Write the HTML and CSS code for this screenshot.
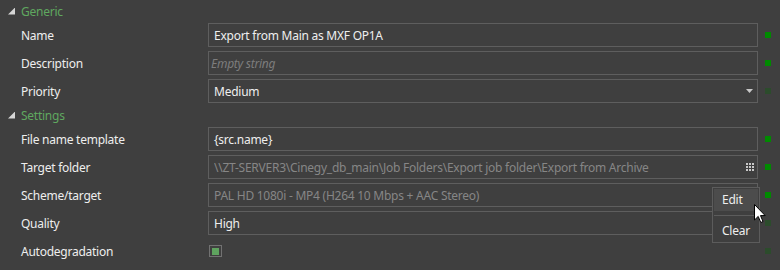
FILE: index.html
```html
<!DOCTYPE html>
<html lang="en">
<head>
  <meta charset="UTF-8" />
  <title>Job properties</title>
  <link rel="stylesheet" href="styles.css">
</head>
<body>
  <div class="grid">
    <!-- Generic -->
    <div class="group">
      <span class="expander"></span>
      <span class="group-title">Generic</span>
    </div>

    <div class="row">
      <div class="label">Name</div>
      <div class="field">Export from Main as MXF OP1A</div>
      <span class="dot ok"></span>
    </div>

    <div class="row">
      <div class="label">Description</div>
      <div class="field placeholder">Empty string</div>
      <span class="dot ok"></span>
    </div>

    <div class="row">
      <div class="label">Priority</div>
      <div class="field combo">
        <span class="value">Medium</span>
        <span class="arrow"></span>
      </div>
      <span class="dot dim"></span>
    </div>

    <!-- Settings -->
    <div class="group">
      <span class="expander"></span>
      <span class="group-title">Settings</span>
    </div>

    <div class="row">
      <div class="label">File name template</div>
      <div class="field">{src.name}</div>
      <span class="dot ok"></span>
    </div>

    <div class="row">
      <div class="label">Target folder</div>
      <div class="field readonly combo">
        <span class="value">\\ZT-SERVER3\Cinegy_db_main\Job Folders\Export job folder\Export from Archive</span>
        <svg class="browse" width="8" height="8" viewBox="0 0 8 8">
          <rect x="0" y="0" width="2" height="2" />
          <rect x="3" y="0" width="2" height="2" />
          <rect x="6" y="0" width="2" height="2" />
          <rect x="0" y="3" width="2" height="2" />
          <rect x="3" y="3" width="2" height="2" />
          <rect x="6" y="3" width="2" height="2" />
          <rect x="0" y="6" width="2" height="2" />
          <rect x="3" y="6" width="2" height="2" />
          <rect x="6" y="6" width="2" height="2" />
        </svg>
      </div>
      <span class="dot ok"></span>
    </div>

    <div class="row">
      <div class="label">Scheme/target</div>
      <div class="field readonly">PAL HD 1080i - MP4 (H264 10 Mbps + AAC Stereo)</div>
      <span class="dot ok"></span>
    </div>

    <div class="row">
      <div class="label">Quality</div>
      <div class="field combo">
        <span class="value">High</span>
        <span class="arrow"></span>
      </div>
      <span class="dot dim"></span>
    </div>

    <div class="row">
      <div class="label">Autodegradation</div>
      <div class="check-cell"><span class="check"><span class="tick"></span></span></div>
      <span class="dot dim"></span>
    </div>
  </div>

  <!-- context menu of Scheme/target -->
  <div class="menu">
    <div class="menu-item hover">Edit</div>
    <div class="menu-sep"></div>
    <div class="menu-item">Clear</div>
  </div>

  <svg class="cursor" width="12" height="20" viewBox="0 0 12 20">
    <path d="M0.5 0.5 L0.5 16 L4.2 12.4 L6.8 18.5 L9 17.5 L6.5 11.6 L11.2 11.6 Z" fill="#fff" stroke="#000" stroke-width="1" stroke-linejoin="miter" />
  </svg>
</body>
</html>
```

FILE: styles.css
```css
* { box-sizing: border-box; }

body {
  margin: 0;
  width: 780px;
  height: 270px;
  background: #3f3f3f;
  color: #eeeeee;
  font-family: 'Noto Sans', 'Open Sans', sans-serif;
  font-size: 12px;
  letter-spacing: -0.25px;
  position: relative;
  overflow: hidden;
}

.grid {
  padding-top: 1px;
}

.group {
  height: 20px;
  display: flex;
  align-items: center;
}

.expander {
  width: 7px;
  height: 7px;
  margin-left: 8px;
  margin-right: 6px;
  background: #d6d6d6;
  clip-path: polygon(100% 0, 100% 100%, 0 100%);
}

.group-title {
  color: #5fa85f;
}

.row {
  height: 28px;
  display: grid;
  grid-template-columns: 208px 550px 22px;
  align-items: center;
}

.label {
  padding-left: 21px;
}

.field {
  height: 24px;
  border: 1px solid #5e5e5e;
  padding: 0 5px;
  display: flex;
  align-items: center;
  white-space: nowrap;
  overflow: hidden;
}

.field.placeholder {
  color: #7d7d7d;
  font-style: italic;
  padding-left: 2px;
}

.field.readonly {
  color: #868686;
}

.combo .value {
  flex: 1;
  overflow: hidden;
}

.arrow {
  width: 7px;
  height: 4px;
  margin-right: -1px;
  background: #c8c8c8;
  clip-path: polygon(0 0, 100% 0, 50% 100%);
}

.browse {
  fill: #c8c8c8;
  margin-right: -2px;
}

.dot {
  width: 6px;
  height: 6px;
  margin-left: 7px;
}

.dot.ok { background: #008a00; }
.dot.dim { background: #2c4c2c; }

.check-cell {
  display: flex;
  align-items: center;
}

.check {
  width: 13px;
  height: 12px;
  margin-left: 1px;
  border: 1px solid #727272;
  display: flex;
  align-items: center;
  justify-content: center;
}

.tick {
  width: 7px;
  height: 7px;
  background: #5fa35f;
}

/* context menu */
.menu {
  position: absolute;
  left: 712px;
  top: 187px;
  width: 48px;
  border: 1px solid #5c5c5c;
  background: #3f3f3f;
  padding: 1px 1px 0;
}

.menu-item {
  height: 22px;
  line-height: 22px;
  padding-left: 8px;
  color: #eeeeee;
}

.menu-item.hover {
  background: #4c4c4c;
}

.menu-sep {
  height: 1px;
  margin: 4px 0;
  background: #5c5c5c;
}

.cursor {
  position: absolute;
  left: 754px;
  top: 204px;
}
```
